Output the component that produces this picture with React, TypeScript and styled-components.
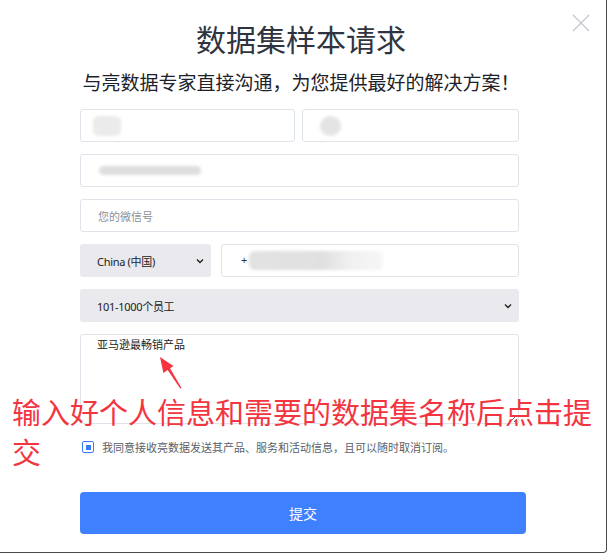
import styled, { createGlobalStyle } from 'styled-components';

const GlobalStyle = createGlobalStyle`
    html, body {
        margin: 0;
        padding: 0;
        background: #ffffff;
    }
    body {
        font-family: "Noto Sans", "Noto Sans CJK SC", sans-serif;
    }
`;

const Page = styled.div`
    position: relative;
    width: 608px;
    height: 553px;
    overflow: hidden;
    background: #ffffff;
`;

const Modal = styled.div`
    position: relative;
    box-sizing: border-box;
    width: 607px;
    height: 553px;
    border-right: 1px solid #4a4a4a;
    border-bottom: 1px solid #4a4a4a;
    border-bottom-right-radius: 4px;
    background: #ffffff;
    padding-top: 18px;
    display: flex;
    flex-direction: column;
    align-items: center;
`;

const CloseButton = styled.div`
    position: absolute;
    top: 14px;
    right: 16px;
    width: 18px;
    height: 18px;
`;

const Title = styled.h1`
    margin: 0;
    font-family: "Noto Sans CJK SC", sans-serif;
    font-size: 30px;
    line-height: 40px;
    font-weight: 400;
    color: #2f3540;
    padding-right: 4px;
`;

const Subtitle = styled.p`
    margin: 12px 0 0 0;
    font-family: "Noto Sans CJK SC", sans-serif;
    font-size: 19px;
    line-height: 24px;
    color: #1d2129;
    padding-right: 4px;
`;

const Form = styled.div`
    margin-top: 15px;
    align-self: flex-start;
    margin-left: 80px;
    width: 439px;
    display: flex;
    flex-direction: column;
    gap: 12px;
`;

const Row = styled.div<{ cols: string; gap: number }>`
    display: grid;
    grid-template-columns: ${p => p.cols};
    gap: ${p => p.gap}px;
`;

const Field = styled.div`
    box-sizing: border-box;
    height: 33px;
    border: 1px solid #dfe3ea;
    border-radius: 3px;
    background: #ffffff;
    display: flex;
    align-items: center;
    padding-left: 10px;
    font-size: 11px;
    color: #333;
    overflow: hidden;
`;

const Placeholder = styled.span`
    font-family: "Noto Sans CJK SC", sans-serif;
    font-size: 11px;
    color: #8a8f99;
    padding-left: 7px;
`;

const Blur = styled.span<{ w: number; h: number; shift?: number; tone?: string; round?: boolean }>`
    display: inline-block;
    width: ${p => p.w}px;
    height: ${p => p.h}px;
    margin-left: ${p => p.shift || 0}px;
    background: ${p => p.tone || '#e6e6e6'};
    border-radius: ${p => (p.round ? '50%' : '6px')};
    filter: blur(1.5px);
    flex: none;
`;

const Plus = styled.span`
    font-size: 11px;
    color: #333;
    margin-left: 9px;
    margin-top: -2px;
`;

const Select = styled.div`
    box-sizing: border-box;
    height: 33px;
    border-radius: 3px;
    background: #e9e9ee;
    display: flex;
    align-items: center;
    justify-content: space-between;
    padding: 0 7px 0 17px;
    font-family: "Noto Sans", "Noto Sans CJK SC", sans-serif;
    font-size: 11px;
    letter-spacing: -0.3px;
    color: #222;
`;

const TextArea = styled.textarea`
    box-sizing: border-box;
    width: 439px;
    height: 90px;
    border: 1px solid #dfe3ea;
    border-radius: 3px;
    padding: 1px 16px;
    margin: 0;
    font-family: "Noto Sans CJK SC", sans-serif;
    font-size: 11px;
    line-height: 16px;
    color: #222;
    resize: vertical;
    outline: none;
    display: block;
`;

const Agree = styled.label`
    display: flex;
    align-items: center;
    gap: 8px;
    margin: 3px 0 0 2px;
    font-family: "Noto Sans CJK SC", sans-serif;
    font-size: 11px;
    color: #5a5f69;
`;

const Check = styled.span`
    box-sizing: border-box;
    width: 12px;
    height: 12px;
    border: 1.5px solid #3a7af5;
    border-radius: 2px;
    display: flex;
    align-items: center;
    justify-content: center;
    &::after {
        content: "";
        width: 5px;
        height: 5px;
        background: #3a7af5;
    }
`;

const SubmitButton = styled.button`
    margin-top: 37px;
    align-self: flex-start;
    margin-left: 80px;
    width: 446px;
    height: 42px;
    border: none;
    border-radius: 4px;
    background: #3f80ff;
    color: #ffffff;
    font-family: "Noto Sans CJK SC", sans-serif;
    font-size: 14px;
    cursor: pointer;
`;

const Annotation = styled.div`
    position: absolute;
    left: 12px;
    top: 391px;
    font-family: "Noto Sans CJK SC", sans-serif;
    font-size: 29px;
    line-height: 40px;
    color: #f3353f;
`;

const AnnotationLine = styled.span`
    display: block;
    width: fit-content;
    white-space: nowrap;
`;

const Arrow = styled.svg`
    position: absolute;
    left: 150px;
    top: 350px;
`;

const Chevron = () => (
    <svg width="8" height="6" viewBox="0 0 8 6">
        <path d="M1 1.5 L4 4.5 L7 1.5" fill="none" stroke="#222" strokeWidth="1.4" />
    </svg>
);

const App = () => {
    return (
        <>
            <GlobalStyle />
            <Page>
                <Modal>
                    <CloseButton>
                        <svg width="18" height="18" viewBox="0 0 18 18">
                            <path d="M1 1 L17 17 M17 1 L1 17" stroke="#c3c7d0" strokeWidth="1.2" />
                        </svg>
                    </CloseButton>
                    <Title>数据集样本请求</Title>
                    <Subtitle>与亮数据专家直接沟通，为您提供最好的解决方案！</Subtitle>
                    <Form>
                        <Row cols="215px 217px" gap={7}>
                            <Field>
                                <Blur w={28} h={20} shift={2} tone="#ebebeb" />
                            </Field>
                            <Field>
                                <Blur w={21} h={20} shift={7} tone="#e4e4e4" round />
                            </Field>
                        </Row>
                        <Field>
                            <Blur w={102} h={9} shift={8} tone="#dedede" />
                        </Field>
                        <Field>
                            <Placeholder>您的微信号</Placeholder>
                        </Field>
                        <Row cols="131px 298px" gap={10}>
                            <Select>
                                China (中国)
                                <Chevron />
                            </Select>
                            <Field>
                                <Plus>+</Plus>
                                <Blur w={134} h={19} shift={2} tone="linear-gradient(90deg, #e2e2e2 0%, #e0e0e0 55%, #f0f0f0 75%, #f6f6f6 100%)" />
                            </Field>
                        </Row>
                        <Select>
                            101-1000个员工
                            <Chevron />
                        </Select>
                        <TextArea readOnly defaultValue="亚马逊最畅销产品" />
                        <Agree>
                            <Check />
                            我同意接收亮数据发送其产品、服务和活动信息，且可以随时取消订阅。
                        </Agree>
                    </Form>
                    <SubmitButton>提交</SubmitButton>
                    <Arrow width="40" height="45" viewBox="0 0 40 45">
                        <polygon points="10,7 13.4,22.9 23.4,16.1" fill="#f3353f" />
                        <polygon points="17,19 19.6,17.5 31.5,38 30.2,38.6" fill="#f3353f" />
                    </Arrow>
                    <Annotation>
                        <AnnotationLine>输入好个人信息和需要的数据集名称后点击提</AnnotationLine>
                        <AnnotationLine>交</AnnotationLine>
                    </Annotation>
                </Modal>
            </Page>
        </>
    );
};

export default App;
